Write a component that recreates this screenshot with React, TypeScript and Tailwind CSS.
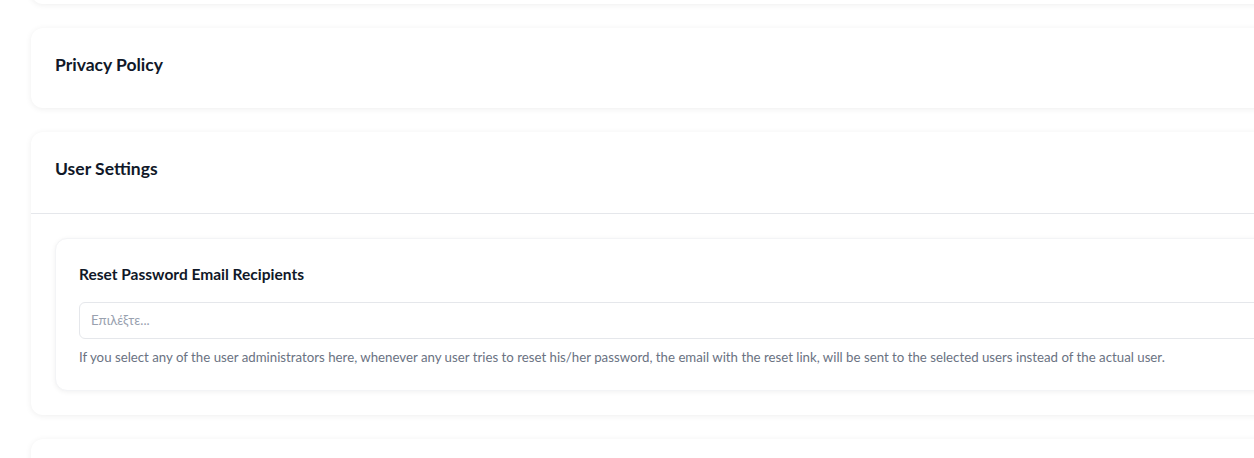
import React from 'react';

const font = { fontFamily: 'Lato, "Noto Sans", sans-serif' };

const Card: React.FC<{ children?: React.ReactNode; className?: string }> = ({ children, className = '' }) => (
  <div className={`bg-white rounded-xl shadow-[0_1px_6px_rgba(0,0,0,0.07)] ${className}`}>{children}</div>
);

const CardHeader: React.FC<{ title: string; divider?: boolean }> = ({ title, divider }) => (
  <div className={`flex items-center px-6 pb-[6px] ${divider ? 'h-[82px] border-b border-gray-200' : 'h-20'}`}>
    <h3 className="text-[17.5px] font-bold text-gray-900">{title}</h3>
  </div>
);

export default function App() {
  return (
    <div className="w-screen h-[458px] overflow-hidden bg-white" style={font}>
      <div className="ml-[31px] w-[1300px] flex flex-col gap-6 -mt-[76px]">
        <Card className="h-20" />
        <Card>
          <CardHeader title="Privacy Policy" />
        </Card>
        <Card>
          <CardHeader title="User Settings" divider />
          <div className="p-6">
            <div className="bg-white rounded-xl border border-gray-100 shadow-[0_1px_5px_rgba(0,0,0,0.06)] px-[23px] pt-[25px] pb-6">
              <label className="block text-[15.5px] leading-5 font-bold text-gray-900 mb-[18px]">
                Reset Password Email Recipients
              </label>
              <div className="h-[37px] border border-gray-200 rounded-md flex items-center px-[11px] text-[13.2px] text-gray-400">
                Επιλέξτε...
              </div>
              <p className="mt-[9px] text-[13.25px] leading-[18px] text-gray-500">
                If you select any of the user administrators here, whenever any user tries to reset his/her password, the email with the reset link, will be sent to the selected users instead of the actual user.
              </p>
            </div>
          </div>
        </Card>
        <Card className="h-20" />
      </div>
    </div>
  );
}
